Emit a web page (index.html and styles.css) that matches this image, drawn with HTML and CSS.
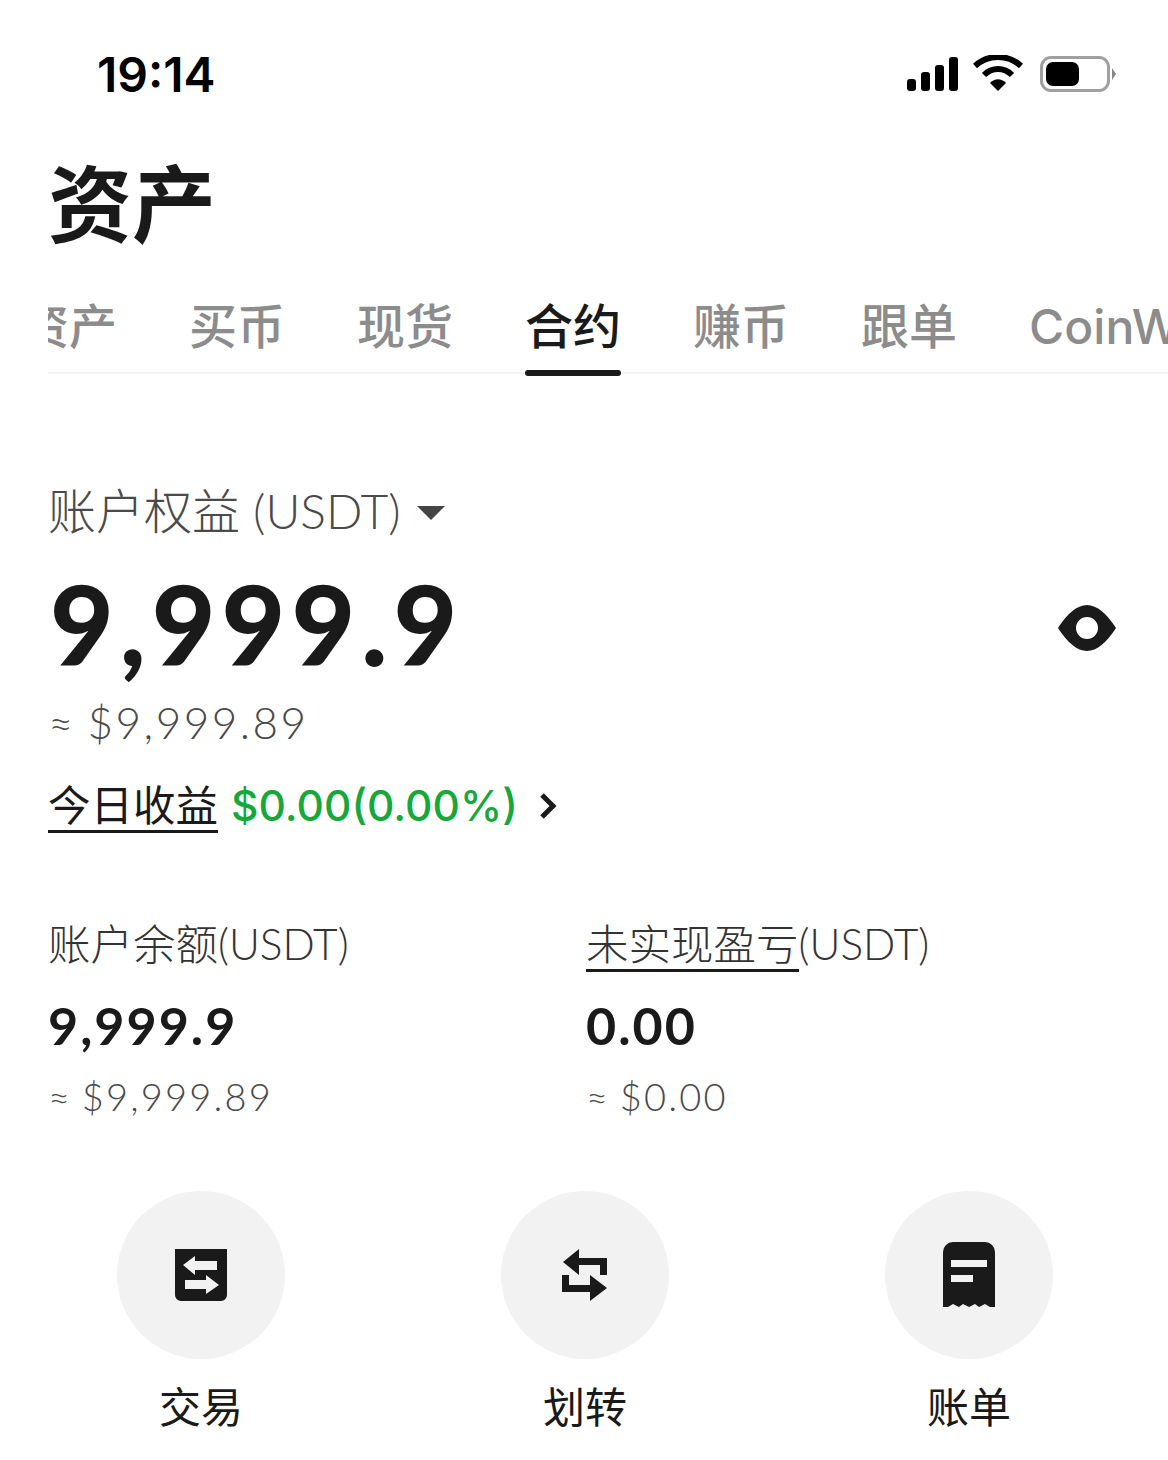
FILE: index.html
```html
<!DOCTYPE html>
<html lang="zh-CN">
<head>
    <meta charset="UTF-8">
    <meta name="viewport" content="width=device-width, initial-scale=1.0">
    <title>资产</title>
    <link rel="stylesheet" href="styles.css">
</head>
<body>
    <div class="status-bar">
        <div class="time">19:14</div>
        <div class="status-icons">
            <svg class="signal" width="52" height="36" viewBox="0 0 52 36">
                <rect x="0" y="23" width="9" height="12" rx="3"/>
                <rect x="14" y="16" width="9" height="19" rx="3"/>
                <rect x="28" y="9" width="9" height="26" rx="3"/>
                <rect x="42" y="1" width="9" height="34" rx="3"/>
            </svg>
            <svg class="wifi" width="50" height="38" viewBox="0 0 50 38">
                <path d="M2 11 C15 -1 35 -1 48 11" fill="none" stroke="#000" stroke-width="6"/>
                <path d="M11 20 C19 12 31 12 39 20" fill="none" stroke="#000" stroke-width="6"/>
                <path d="M17 28 C22 23 28 23 33 28 L25 36 Z"/>
            </svg>
            <div class="battery">
                <div class="battery-body"><div class="battery-level"></div></div>
                <div class="battery-cap"></div>
            </div>
        </div>
    </div>

    <h1 class="page-title">资产</h1>

    <div class="tabs">
        <div class="tab">资产</div>
        <div class="tab">买币</div>
        <div class="tab">现货</div>
        <div class="tab active">合约</div>
        <div class="tab">赚币</div>
        <div class="tab">跟单</div>
        <div class="tab">CoinW</div>
    </div>

    <section class="equity">
        <div class="equity-label">账户权益 (USDT)<span class="caret"></span></div>
        <div class="equity-row">
            <div class="equity-value">9,999.9</div>
            <svg class="eye" width="58" height="46" viewBox="0 0 58 46">
                <path fill="#1a1a1a" fill-rule="evenodd" d="M0 23 C9 9 19 0 29 0 C39 0 49 9 58 23 C49 37 39 46 29 46 C19 46 9 37 0 23 Z M29 12 A11 11 0 1 0 29 34 A11 11 0 1 0 29 12 Z"/>
            </svg>
        </div>
        <div class="equity-fiat">≈ $9,999.89</div>
        <div class="today">
            <span class="today-label">今日收益</span>
            <span class="today-value">$0.00(0.00%)</span>
            <svg class="chevron" width="20" height="30" viewBox="0 0 20 30">
                <path d="M3 4 L14 15 L3 26" fill="none" stroke="#1a1a1a" stroke-width="5"/>
            </svg>
        </div>
    </section>

    <section class="stats">
        <div class="stat">
            <div class="stat-label">账户余额(USDT)</div>
            <div class="stat-value">9,999.9</div>
            <div class="stat-fiat">≈ $9,999.89</div>
        </div>
        <div class="stat">
            <div class="stat-label"><span class="dashed">未实现盈亏</span>(USDT)</div>
            <div class="stat-value">0.00</div>
            <div class="stat-fiat">≈ $0.00</div>
        </div>
    </section>

    <section class="actions">
        <div class="action">
            <div class="action-circle">
                <svg width="52" height="52" viewBox="0 0 52 52">
                    <path fill="#1a1a1a" fill-rule="evenodd" d="M0 0 H52 V46 A6 6 0 0 1 46 52 H6 A6 6 0 0 1 0 46 Z M8 16 L20 7 V12 H42 V21 H20 V26 Z M44 36 L31 45 V40 H10 V31 H31 V26 Z"/>
                </svg>
            </div>
            <div class="action-label">交易</div>
        </div>
        <div class="action">
            <div class="action-circle">
                <svg width="46" height="52" viewBox="0 0 46 52">
                    <path fill="#1a1a1a" d="M1 13 L17 0 V9 H45 V26 H38 V16 H17 V26 Z M0 26 H7 V36 H28 V26 L45 39 L28 52 V43 H0 Z"/>
                </svg>
            </div>
            <div class="action-label">划转</div>
        </div>
        <div class="action">
            <div class="action-circle">
                <svg width="52" height="66" viewBox="0 0 52 66">
                    <path fill="#1a1a1a" fill-rule="evenodd" d="M10 0 H42 A10 10 0 0 1 52 10 V65 L47 65 L42 62 L36 65 L32 62 L26 65 L20 62 L16 65 L10 62 L5 65 L0 65 V10 A10 10 0 0 1 10 0 Z M8 18 V25 H44 V18 Z M8 33 V40 H30 V33 Z"/>
                </svg>
            </div>
            <div class="action-label">账单</div>
        </div>
    </section>
</body>
</html>
```
FILE: styles.css
```css
* {
    margin: 0;
    padding: 0;
    box-sizing: border-box;
    font-family: Lato, "Noto Sans CJK SC", sans-serif;
}

body {
    width: 1168px;
    height: 1460px;
    background: #fff;
    color: #1a1a1a;
    overflow: hidden;
}

.status-bar {
    display: flex;
    justify-content: space-between;
    align-items: center;
    height: 148px;
    padding: 0 52px 0 97px;
}

.time {
    font-family: Inter, sans-serif;
    font-size: 48px;
    font-weight: 600;
    color: #000;
}

.status-icons {
    display: flex;
    align-items: center;
    gap: 17px;
}

.signal {
    margin-right: -3px;
}

.battery {
    display: flex;
    align-items: center;
    gap: 2px;
}

.battery-body {
    width: 70px;
    height: 36px;
    border: 3px solid #a0a0a0;
    border-radius: 11px;
    padding: 3px;
}

.battery-level {
    width: 33px;
    height: 24px;
    background: #000;
    border-radius: 7px;
}

.battery-cap {
    width: 4px;
    height: 12px;
    background: #888;
    clip-path: polygon(0 0, 100% 50%, 0 100%);
}

.page-title {
    margin-left: 48px;
    font-size: 84px;
    line-height: 112px;
    font-weight: 700;
}

.tabs {
    display: flex;
    gap: 72px;
    margin: 33px 0 0 48px;
    height: 83px;
    background: linear-gradient(#f3f3f3, #f3f3f3) 0 79px / 100% 2px no-repeat;
    overflow: hidden;
    white-space: nowrap;
}

.tab {
    flex: none;
    height: 83px;
    font-family: Inter, "Noto Sans CJK SC", sans-serif;
    font-size: 48px;
    line-height: 68px;
    font-weight: 500;
    color: #8c8c8c;
}

.tab:first-child {
    margin-left: -27px;
}

.tab.active {
    position: relative;
    color: #1a1a1a;
}

.tab.active::after {
    content: "";
    position: absolute;
    left: 0;
    right: 0;
    bottom: 0;
    height: 6px;
    background: #1a1a1a;
    border-radius: 3px;
}

.equity {
    padding: 102px 52px 0 48px;
}

.equity-label {
    display: flex;
    align-items: center;
    font-size: 48px;
    line-height: 66px;
    font-weight: 300;
    color: #4a4a4a;
}

.caret {
    margin: 4px 0 0 16px;
    border-left: 14px solid transparent;
    border-right: 14px solid transparent;
    border-top: 14px solid #444;
}

.equity-row {
    display: flex;
    justify-content: space-between;
    align-items: center;
    height: 108px;
    margin-top: 25px;
}

.equity-value {
    font-size: 110px;
    font-weight: 900;
    letter-spacing: 6px;
    margin-left: 2px;
}

.eye {
    margin-top: 10px;
}

.equity-fiat {
    margin-top: 20px;
    font-size: 44px;
    line-height: 50px;
    font-weight: 300;
    color: #4a4a4a;
    letter-spacing: 2.5px;
    word-spacing: -3px;
}

.today {
    display: flex;
    align-items: center;
    margin-top: 29px;
    font-size: 42.5px;
    line-height: 60px;
}

.today-label {
    font-weight: 400;
    border-bottom: 3px solid #1a1a1a;
    line-height: 50px;
}

.today-value {
    margin-left: 13px;
    font-family: Inter, sans-serif;
    font-weight: 500;
    color: #16a83a;
}

.chevron {
    margin-left: 21px;
}

.stats {
    display: grid;
    grid-template-columns: 538px 1fr;
    padding: 78px 0 0 48px;
}

.stat-label {
    font-size: 42.5px;
    line-height: 60px;
    font-weight: 300;
    color: #333;
}

.dashed {
    border-bottom: 3px solid #1a1a1a;
}

.stat-value {
    margin-top: 21px;
    font-size: 52px;
    line-height: 60px;
    font-weight: 700;
    letter-spacing: 2px;
}

.stat-fiat {
    margin-top: 16px;
    font-size: 38px;
    line-height: 50px;
    font-weight: 300;
    color: #4a4a4a;
    letter-spacing: 2.2px;
    word-spacing: -3px;
}

.actions {
    display: grid;
    grid-template-columns: 168px 168px 168px;
    justify-content: space-between;
    margin-top: 70px;
    padding: 0 115px 0 117px;
}

.action {
    display: flex;
    flex-direction: column;
    align-items: center;
}

.action-circle {
    display: flex;
    justify-content: center;
    align-items: center;
    width: 168px;
    height: 168px;
    border-radius: 50%;
    background: #f2f2f2;
}

.action-label {
    margin-top: 19px;
    font-size: 42px;
    line-height: 58px;
    font-weight: 400;
}
```
